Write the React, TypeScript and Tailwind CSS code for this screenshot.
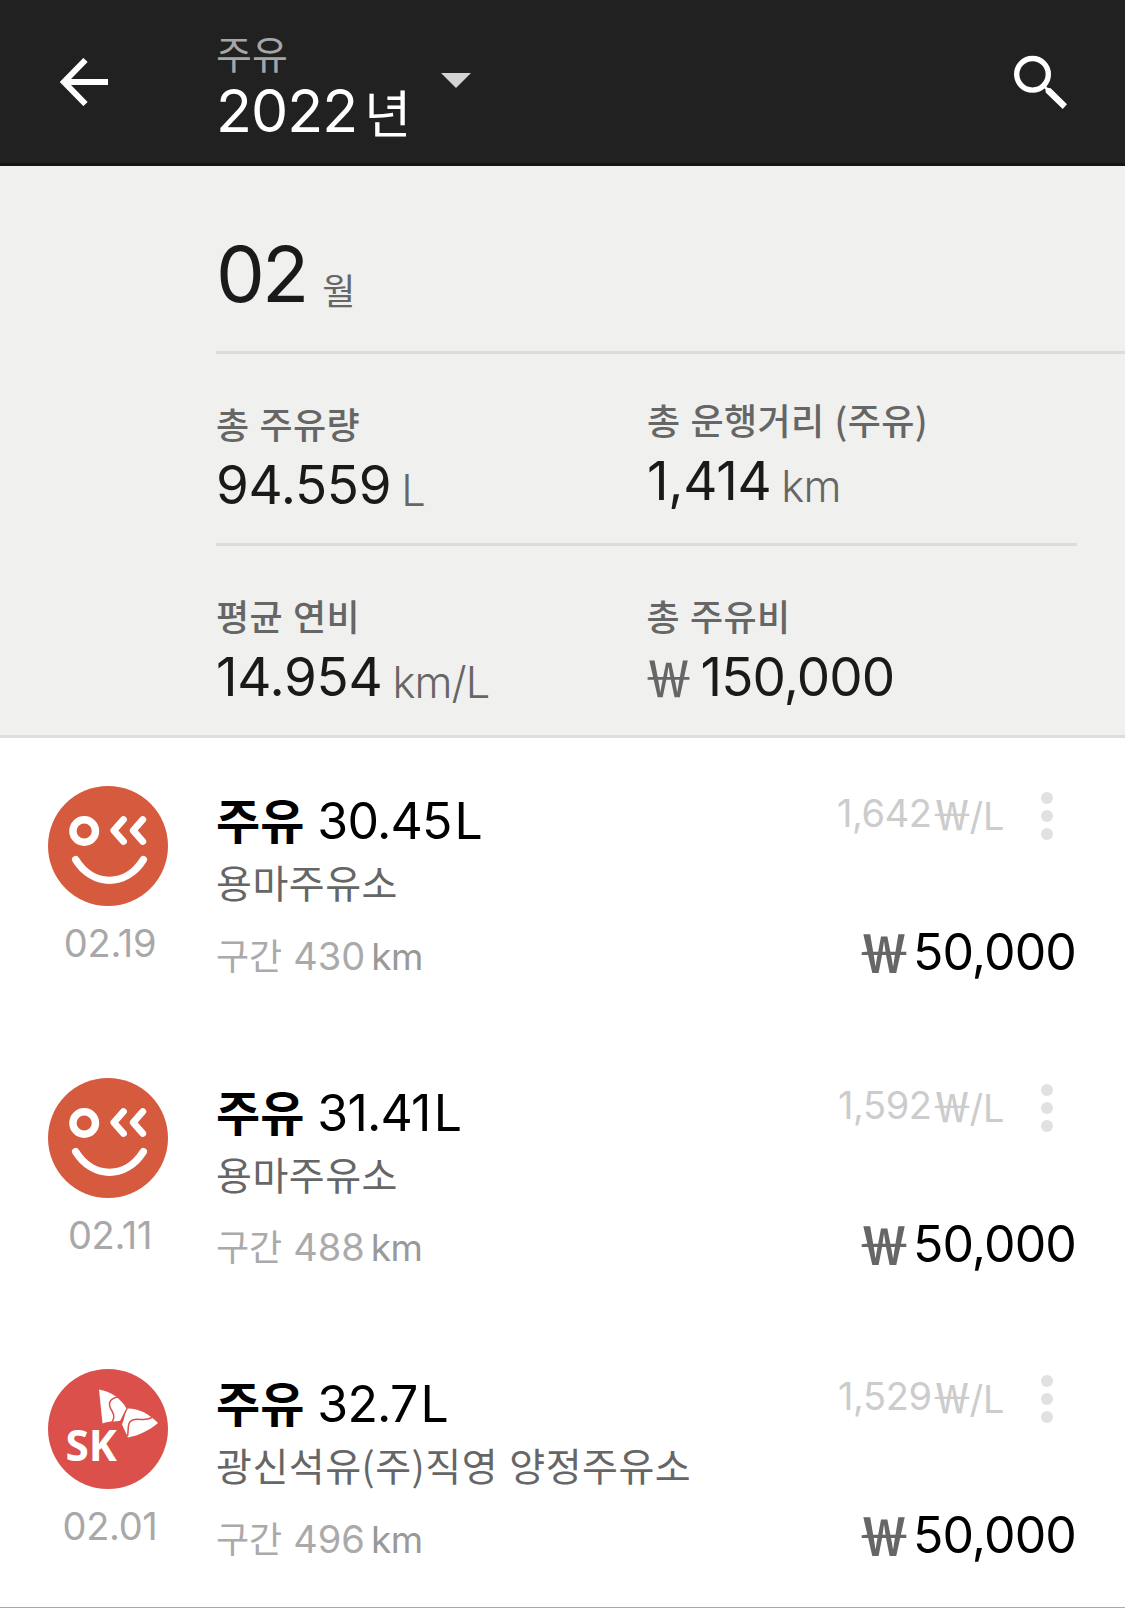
import React from "react";

type Refuel = {
  brand: "ok" | "sk";
  date: string;
  liters: string;
  station: string;
  distance: string;
  unitPrice: string;
  cost: string;
};

const refuels: Refuel[] = [
  { brand: "ok", date: "02.19", liters: "30.45", station: "용마주유소", distance: "430", unitPrice: "1,642", cost: "50,000" },
  { brand: "ok", date: "02.11", liters: "31.41", station: "용마주유소", distance: "488", unitPrice: "1,592", cost: "50,000" },
  { brand: "sk", date: "02.01", liters: "32.7", station: "광신석유(주)직영 양정주유소", distance: "496", unitPrice: "1,529", cost: "50,000" },
];

const kr = "font-['Noto_Sans_CJK_KR',sans-serif]";

function SmileLogo() {
  return (
    <svg viewBox="0 0 120 120" className="block size-[120px]" fill="none" stroke="#fff" strokeLinecap="round" strokeLinejoin="round">
      <circle cx="60" cy="60" r="60" fill="#d65a3e" stroke="none" />
      <circle cx="36.2" cy="45" r="11.3" strokeWidth="7.4" />
      <path d="M75.5 33.5 L65.8 44.5 L75.5 55.500 M94.800 33.500 L85.200 44.500 L94.800 55.500" strokeWidth="6.800" />
      <path d="M27.700 73.700 C45 101.200 78 101.200 95.300 73.700" strokeWidth="7.400" />
    </svg>
  );
}

function SkLogo() {
  return (
    <svg viewBox="0 0 120 120" className="block size-[120px]">
      <circle cx="60" cy="60" r="60" fill="#db504b" />
      <path d="M51 20.500 C62 22.500 73 29 78.500 39.500 L72.500 51.500 C70 52.500 68 52 66 52.500 C62 52.500 58 53 54.500 54.500 Z" fill="#fff" />
      <path d="M78.500 39.500 C90 39 101 44.500 110 54 C101 61.500 91 66.500 80 68.500 L74 55.500 C76 51 77 45 78.500 39.500 Z" fill="#fff" />
      <path d="M69.500 28 C60 30 60 36 64 42 C67 47 66 50 63.500 54 M104 48.500 C96 53 91 48.500 84.500 51 C78.500 53.500 81 61 79.500 67" fill="none" stroke="#db504b" strokeWidth="1.500" />
      <path d="M79.500 38.500 L72 54" stroke="#db504b" strokeWidth="1.400" />
      <text x="17.500" y="92" fill="#fff" fontFamily="'Noto Sans', sans-serif" fontWeight="700" fontSize="43" textLength="51.500" lengthAdjust="spacingAndGlyphs">SK</text>
    </svg>
  );
}

type StatProps = { label: string; value: string; unit?: string; won?: boolean; raised?: boolean };

function Stat({ label, value, unit, won, raised }: StatProps) {
  return (
    <div className={raised ? "w-[430px] pt-[45px]" : "w-[431px] pt-[49px]"}>
      <div className={`${kr} h-10 text-[36px] leading-10 font-medium tracking-[0.4px] [word-spacing:1.5px] text-[#666]`}>{label}</div>
      <div className={won ? "mt-[12px] h-[60px] text-[53px] leading-[60px] tracking-[-0.9px] text-[#1a1a1a]" : "mt-[12px] h-[60px] text-[53px] leading-[60px] tracking-[-0.3px] text-[#1a1a1a]"}>
        {won && <span className={`${kr} mr-[7px] -ml-[3px] align-[-1px] text-[50px] leading-none font-medium tracking-normal text-[#666]`}>￦</span>}
        <span>{value}</span>
        {unit && <span className="ml-[10px] align-[-2px] text-[43.5px] leading-none font-light tracking-[-0.9px] text-[#666]">{unit}</span>}
      </div>
    </div>
  );
}

function RefuelRow({ item }: { item: Refuel }) {
  return (
    <div className="flex h-[291.5px]">
      <div className="flex w-[216px] flex-col pt-[48px] pl-[48px]">
        {item.brand === "ok" ? <SmileLogo /> : <SkLogo />}
        <div className="mt-[17px] w-[124px] text-center text-[38px] leading-10 tracking-[-0.3px] text-[#a8a8a8]">{item.date}</div>
      </div>
      <div className="flex-1 pt-[53px]">
        <div className="h-[60px] text-[50px] leading-[60px] tracking-[-0.8px] text-black">
          <span className={`${kr} mr-[13px] text-[48px] leading-none font-bold tracking-normal`}>주유</span>
          <span>{item.liters}</span>
          <span className="ml-[3px]">L</span>
        </div>
        <div className={`${kr} mt-[6px] h-12 text-[39px] leading-[48px] tracking-[0.5px] whitespace-nowrap [word-spacing:2px] text-[#666]`}>{item.station}</div>
        <div className="mt-[30.5px] h-10 text-[38px] leading-10 text-[#aaa]">
          <span className={`${kr} mr-[11px] text-[36px] leading-none`}>구간</span>
          <span>{item.distance}</span>
          <span className="ml-[6px] text-[37px] leading-none tracking-[-0.6px] text-[#999]">km</span>
        </div>
      </div>
      <div className="flex w-[300px] flex-col pr-[48px]">
        <div className="flex justify-end pt-[54px]">
          <div className="h-[42px] text-[38px] leading-10 tracking-[-0.4px] whitespace-nowrap text-[#ccc]">
            <span>{item.unitPrice}</span>
            <span className={`${kr} -mr-[3px] align-[-3px] text-[41px] leading-none font-medium tracking-normal`}>￦</span>
            <span className="align-[-3px] leading-none">/L</span>
          </div>
          <div className="ml-[37px] flex w-[36px] flex-col gap-[6px]">
            <span className="size-3 rounded-full bg-[#e1e1e1]" />
            <span className="size-3 rounded-full bg-[#e1e1e1]" />
            <span className="size-3 rounded-full bg-[#e1e1e1]" />
          </div>
        </div>
        <div className="mt-[82px] -mr-[1px] h-[60px] text-right text-[50px] leading-[60px] tracking-[-0.9px] whitespace-nowrap text-black">
          <span className={`${kr} mr-[3px] align-[-3px] text-[52px] leading-none font-bold tracking-normal text-[#666]`}>￦</span>
          <span className="mr-[2px]">{item.cost}</span>
        </div>
      </div>
    </div>
  );
}

export default function App() {
  return (
    <div className="h-[1608px] w-[1125px] overflow-hidden border-b border-[#aaa] bg-white font-['Inter','Noto_Sans_CJK_KR',sans-serif]">
      <header className="flex h-[166px] border-b-[3px] border-[#151515] bg-[#212121]">
        <div className="w-[216px] pt-[58px] pl-[60px]">
          <svg viewBox="0 0 48 48" className="block size-12" fill="none" stroke="#fff" strokeWidth="6">
            <path d="M25.500 2 L4 24 L25.500 46 M4 24 H48" />
          </svg>
        </div>
        <div className="pt-[35px]">
          <div className="h-[40px] text-[39px] leading-[40px] text-[#a6a6a6]">주유</div>
          <div className="mt-[4px] h-[64px] text-[59px] leading-[64px] tracking-[-1px] text-white">
            <span>2022</span>
            <span className="ml-[7px] align-[-1px] text-[51px] leading-none">년</span>
          </div>
        </div>
        <svg viewBox="0 0 30 15" className="mt-[73px] ml-[31px] block h-[15px] w-[30px]">
          <path d="M0 0 H30 L15 15 Z" fill="#d3d3d3" />
        </svg>
        <svg viewBox="0 0 54 54" className="mt-[55px] mr-[57px] ml-auto block size-[54px]">
          <circle cx="18.500" cy="19.300" r="15.800" fill="none" stroke="#fff" strokeWidth="5.400" />
          <path d="M28.500 31 L31 30 L33.500 32.700 L36.700 33.300 L53 49.300 L48.700 54 L31.700 37.500 L31.500 34.500 Z" fill="#fff" />
        </svg>
      </header>

      <section className="border-b-[3px] border-[#dededd] bg-[#f0f0ee] pl-[216px]">
        <div className="border-b-[3px] border-[#dcdcda] pt-[68px] pb-[37px]">
          <div className="h-[80px] text-[77.5px] leading-[80px] tracking-[-3px] text-[#1a1a1a]">
            <span>02</span>
            <span className={`${kr} ml-[16px] align-[-3px] text-[36px] leading-none text-[#666]`}>월</span>
          </div>
        </div>
        <div className="mr-[48px] flex h-[192px] border-b-[3px] border-[#dcdcda]">
          <Stat label="총 주유량" value="94.559" unit="L" />
          <Stat label="총 운행거리 (주유)" value="1,414" unit="km" raised />
        </div>
        <div className="mr-[48px] flex h-[189px]">
          <Stat label="평균 연비" value="14.954" unit="km/L" />
          <Stat label="총 주유비" value="150,000" won />
        </div>
      </section>

      <main>
        {refuels.map((item) => (
          <RefuelRow key={item.date} item={item} />
        ))}
      </main>
    </div>
  );
}
